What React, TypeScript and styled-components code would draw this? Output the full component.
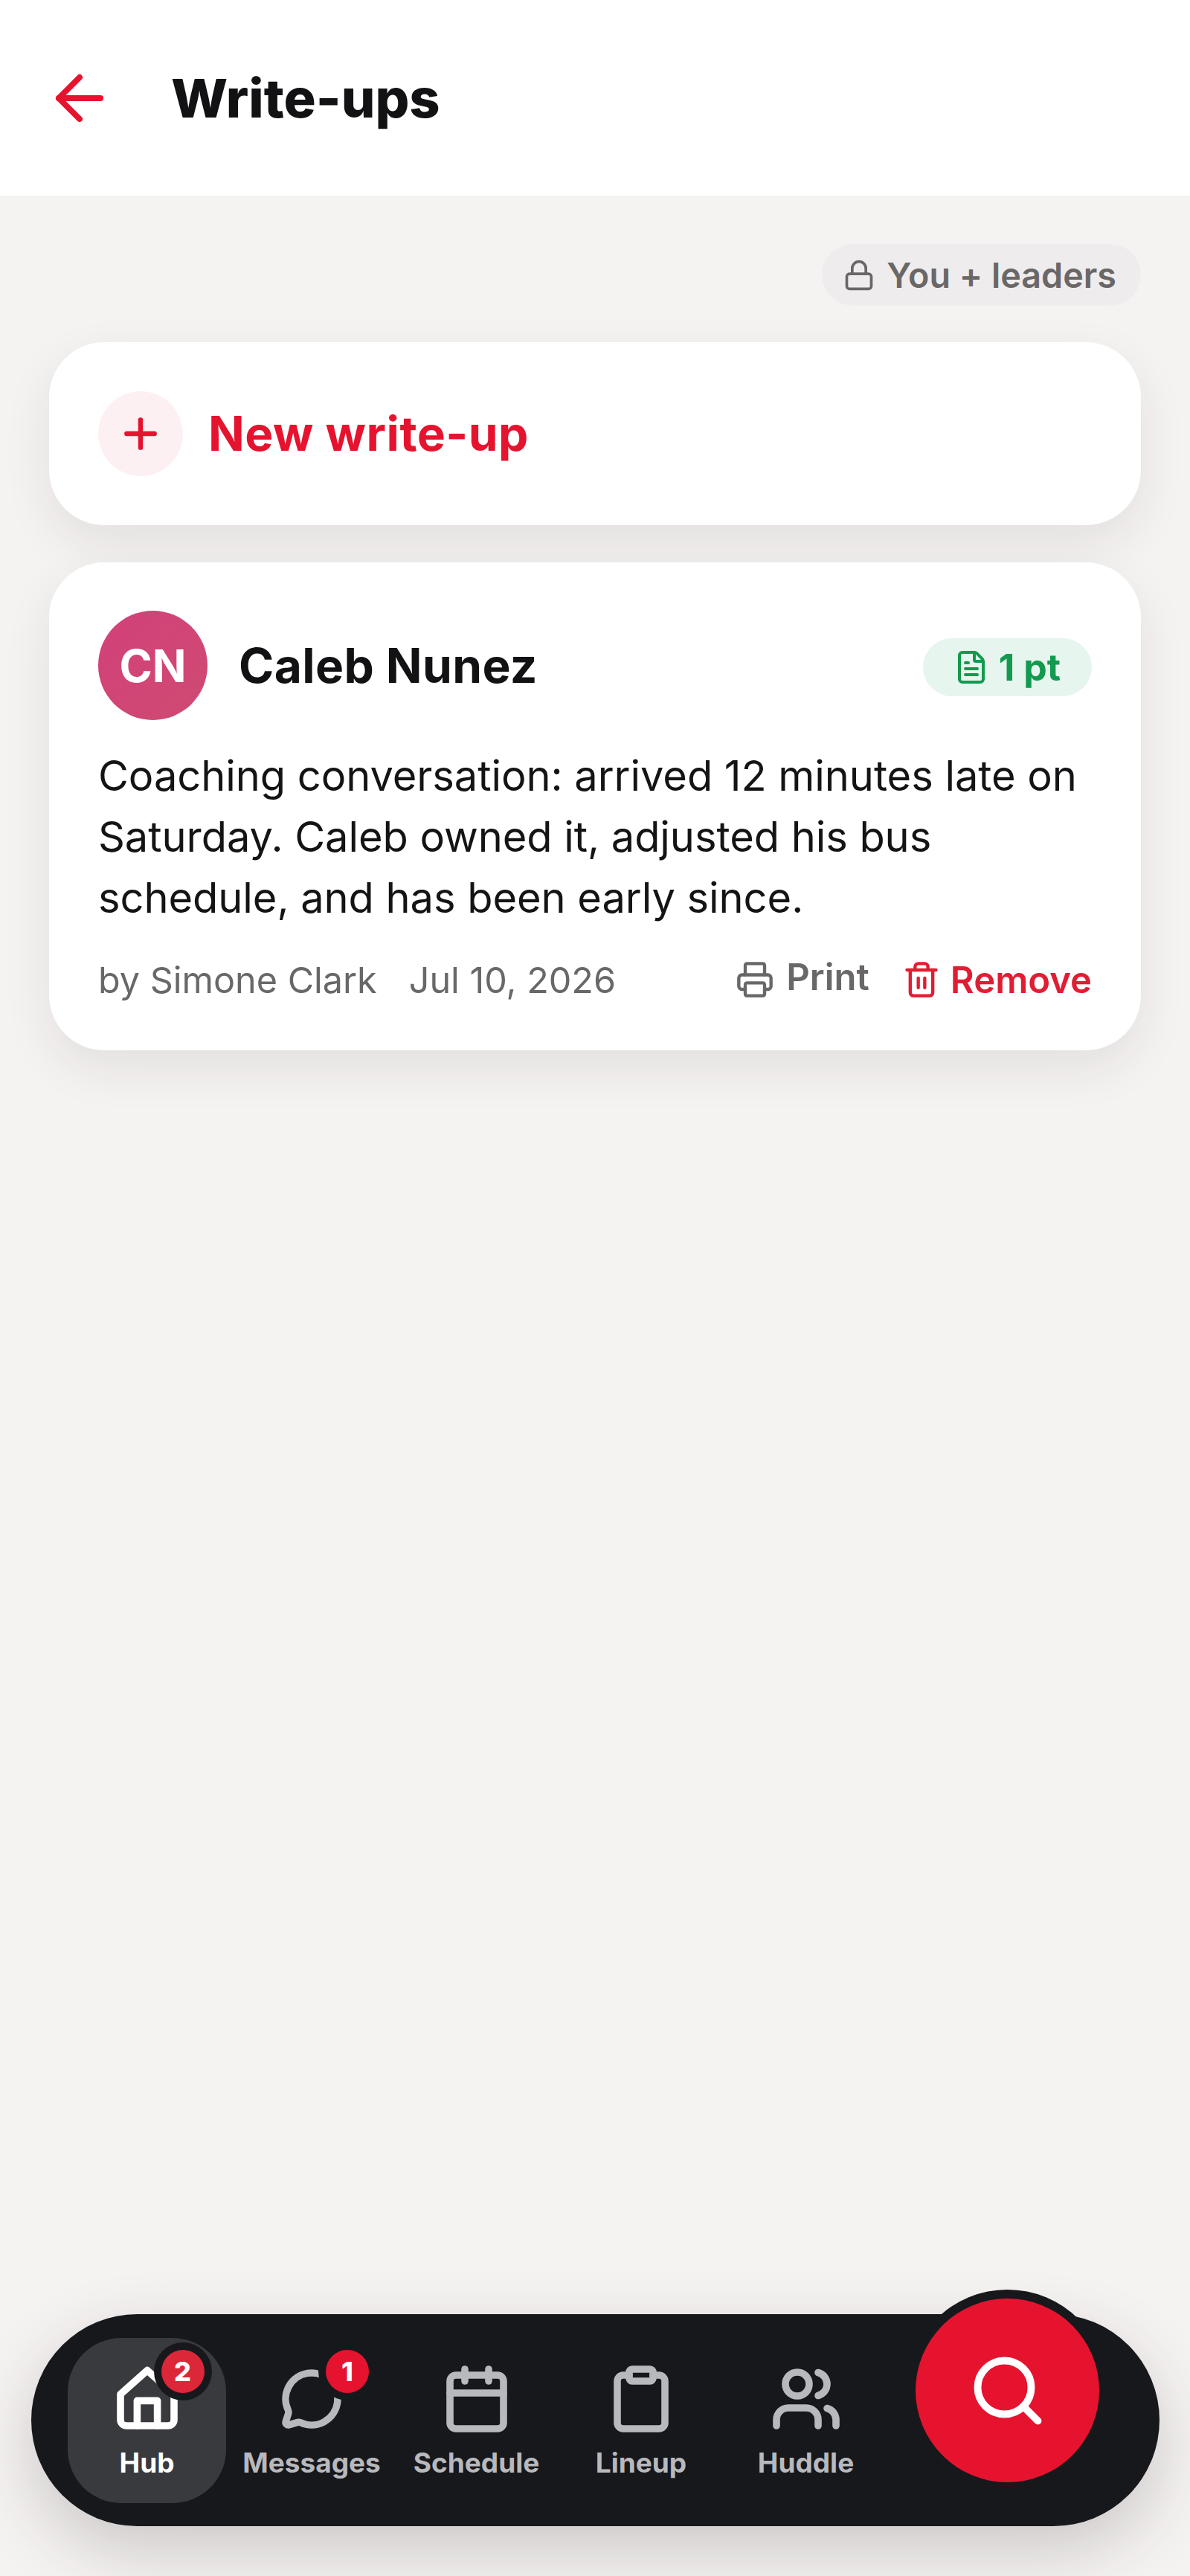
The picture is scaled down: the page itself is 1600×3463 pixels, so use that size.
import React from 'react'
import styled, { createGlobalStyle } from 'styled-components'
import {
  ArrowLeft,
  Calendar,
  Clipboard,
  FileText,
  Lock,
  MessageCircle,
  Plus,
  Printer,
  Search,
  Trash2,
  Users
} from 'lucide-react'

const RED = '#e6132f'
const INK = '#121214'
const GREY = '#6a6767'
const PAGE_BG = '#f5f3f2'

const GlobalStyle = createGlobalStyle`
  html, body {
    margin: 0;
    padding: 0;
    background: ${PAGE_BG};
  }
  body {
    font-family: Inter, "Noto Sans", sans-serif;
    color: ${INK};
  }
`

const Page = styled.div`
  width: 1600px;
  height: 3463px;
  display: flex;
  flex-direction: column;
  overflow: hidden;
  background: ${PAGE_BG};
`

const Header = styled.header`
  height: 263px;
  flex: none;
  display: flex;
  align-items: center;
  padding-left: 59px;
  gap: 75px;
  background: #fff;
  color: ${RED};
`

const Title = styled.h1`
  margin: 0;
  font-size: 72px;
  line-height: 88px;
  font-weight: 800;
  color: ${INK};
`

const Content = styled.main`
  flex: 1;
  display: flex;
  flex-direction: column;
  gap: 50px;
  padding: 65px 66px 0;
`

const ChipRow = styled.div`
  display: flex;
  justify-content: flex-end;
  margin-bottom: -1px;
`

const Chip = styled.div`
  height: 83px;
  display: flex;
  align-items: center;
  gap: 15px;
  padding: 0 33px 0 28px;
  border-radius: 42px;
  background: #efeced;
  color: ${GREY};
  font-size: 46.7px;
  font-weight: 600;
`

const Card = styled.section`
  background: #fff;
  border-radius: 74px;
  box-shadow: 0 24px 64px rgba(30, 25, 25, 0.085);
`

const NewCard = styled(Card)`
  display: flex;
  align-items: center;
  gap: 34px;
  padding: 66px;
  color: ${RED};
  font-size: 64px;
  line-height: 114px;
  font-weight: 700;
  letter-spacing: 0.5px;
`

const PlusCircle = styled.span`
  width: 114px;
  height: 114px;
  flex: none;
  display: flex;
  align-items: center;
  justify-content: center;
  border-radius: 50%;
  background: #fdf0f3;
`

const EntryCard = styled(Card)`
  display: flex;
  flex-direction: column;
  padding: 65px 66px 64px;
`

const EntryHead = styled.div`
  display: flex;
  align-items: center;
  gap: 42px;
`

const Avatar = styled.span`
  width: 147px;
  height: 147px;
  flex: none;
  display: flex;
  align-items: center;
  justify-content: center;
  border-radius: 50%;
  background: linear-gradient(135deg, #d2417a, #cf4a72);
  color: #fff;
  font-size: 60px;
  font-weight: 700;
`

const Name = styled.div`
  flex: 1;
  font-size: 64px;
  font-weight: 700;
  letter-spacing: 0.4px;
`

const PointBadge = styled.span`
  height: 78px;
  margin-top: 4px;
  display: flex;
  align-items: center;
  gap: 13px;
  padding: 0 42px 0 41px;
  border-radius: 39px;
  background: #e6f5ee;
  color: #129a4f;
  font-size: 50px;
  font-weight: 700;
`

const Body = styled.p`
  margin: 34px 0 0;
  font-size: 56px;
  line-height: 82px;
  font-weight: 400;
  letter-spacing: -0.06px;
  color: #141416;
`

const MetaRow = styled.div`
  display: flex;
  align-items: center;
  margin-top: 38px;
  height: 62px;
  color: ${GREY};
  font-size: 48.5px;
`

const Meta = styled.span`
  margin-right: 43px;
`

const Actions = styled.div`
  margin-left: auto;
  display: flex;
  align-items: center;
  gap: 44px;
`

const Action = styled.span<{ $danger?: boolean }>`
  display: flex;
  align-items: center;
  gap: ${({ $danger }) => ($danger ? 13 : 16)}px;
  font-size: 49px;
  font-weight: 600;
  color: ${({ $danger }) => ($danger ? '#e01e33' : GREY)};
`

const ActionLabel = styled.span<{ $raised?: boolean }>`
  transform: translateY(${({ $raised }) => ($raised ? -4 : 0)}px);
`

const Nav = styled.nav`
  position: relative;
  flex: none;
  height: 285px;
  margin: 0 41px 67px 42px;
  padding: 32px 0 0 49px;
  box-sizing: border-box;
  display: flex;
  gap: 8.5px;
  border-radius: 143px;
  background: #17181c;
  box-shadow: 0 32px 90px rgba(40, 25, 25, 0.2);
`

const NavItem = styled.div<{ $active?: boolean }>`
  width: 213px;
  height: 222px;
  padding-top: 34px;
  box-sizing: border-box;
  display: flex;
  flex-direction: column;
  align-items: center;
  gap: 16px;
  border-radius: 72px;
  background: ${({ $active }) => ($active ? '#393a3e' : 'transparent')};
  color: ${({ $active }) => ($active ? '#fff' : '#b8b9bc')};
`

const IconWrap = styled.span`
  position: relative;
  display: flex;
  align-items: center;
  justify-content: center;
  width: 96px;
  height: 96px;
`

const NavLabel = styled.span`
  font-size: 37px;
  line-height: 44px;
  font-weight: 700;
  white-space: nowrap;
`

const Count = styled.span<{ $muted?: boolean }>`
  position: absolute;
  top: -18px;
  right: -29px;
  width: 58px;
  height: 58px;
  display: flex;
  align-items: center;
  justify-content: center;
  border-radius: 50%;
  background: ${({ $muted }) => ($muted ? '#dc2738' : RED)};
  box-shadow: 0 0 0 10px #17181c;
  color: #fff;
  font-size: 36px;
  font-weight: 800;
`

const SearchButton = styled.button`
  position: absolute;
  top: -21px;
  left: 1189px;
  width: 247px;
  height: 247px;
  padding: 0;
  display: flex;
  align-items: center;
  justify-content: center;
  border: none;
  border-radius: 50%;
  background: ${RED};
  box-shadow: 0 0 0 12px #17181c;
  color: #fff;
`

type IconProps = { size: number; strokeWidth: number }

// peaked roof and square door, lucide's house is rounder than the one in the bar
function HubIcon({ size, strokeWidth }: IconProps) {
  return (
    <svg
      width={size}
      height={size}
      viewBox="0 0 24 24"
      fill="none"
      stroke="currentColor"
      strokeWidth={strokeWidth}
      strokeLinejoin="round"
      strokeLinecap="round"
    >
      <path d="M3 10.4 12 2.4l9 8V19a2 2 0 0 1-2 2H5a2 2 0 0 1-2-2z" />
      <path d="M8.6 21v-8.4h6.8V21" />
    </svg>
  )
}

const navItems = [
  { label: 'Hub', Icon: HubIcon, count: 2, active: true, size: 96, stroke: 2.4 },
  { label: 'Messages', Icon: MessageCircle, count: 1, size: 84, stroke: 2.7 },
  { label: 'Schedule', Icon: Calendar, size: 96, stroke: 2.4 },
  { label: 'Lineup', Icon: Clipboard, size: 96, stroke: 2.4 },
  { label: 'Huddle', Icon: Users, size: 96, stroke: 2.4 }
]

export default function App() {
  return (
    <Page>
      <GlobalStyle />
      <Header>
        <ArrowLeft size={96} strokeWidth={2} />
        <Title>Write-ups</Title>
      </Header>
      <Content>
        <ChipRow>
          <Chip>
            <Lock size={44} strokeWidth={2} />
            You + leaders
          </Chip>
        </ChipRow>
        <NewCard>
          <PlusCircle>
            <Plus size={64} strokeWidth={2.4} />
          </PlusCircle>
          New write-up
        </NewCard>
        <EntryCard>
          <EntryHead>
            <Avatar>CN</Avatar>
            <Name>Caleb Nunez</Name>
            <PointBadge>
              <FileText size={48} strokeWidth={2} />
              1 pt
            </PointBadge>
          </EntryHead>
          <Body>
            Coaching conversation: arrived 12 minutes late on Saturday. Caleb owned it, adjusted his bus schedule, and
            has been early since.
          </Body>
          <MetaRow>
            <Meta>by Simone Clark</Meta>
            <Meta>Jul 10, 2026</Meta>
            <Actions>
              <Action>
                <Printer size={52} strokeWidth={2} />
                <ActionLabel $raised>Print</ActionLabel>
              </Action>
              <Action $danger>
                <Trash2 size={52} strokeWidth={2} />
                <ActionLabel>Remove</ActionLabel>
              </Action>
            </Actions>
          </MetaRow>
        </EntryCard>
      </Content>
      <Nav>
        {navItems.map(({ label, Icon, count, active, size, stroke }) => (
          <NavItem key={label} $active={active}>
            <IconWrap>
              <Icon size={size} strokeWidth={stroke} />
              {count ? <Count $muted={active}>{count}</Count> : null}
            </IconWrap>
            <NavLabel>{label}</NavLabel>
          </NavItem>
        ))}
        <SearchButton>
          <Search size={108} strokeWidth={2.2} />
        </SearchButton>
      </Nav>
    </Page>
  )
}
